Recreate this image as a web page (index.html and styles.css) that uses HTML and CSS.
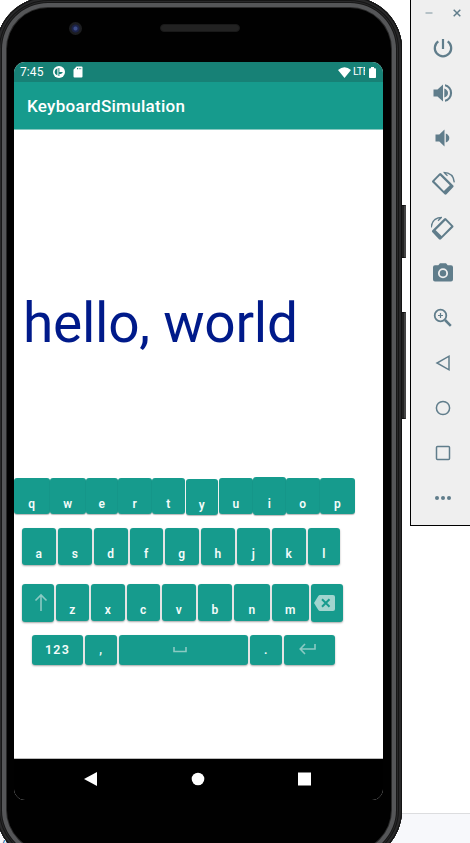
FILE: index.html
```html
<!DOCTYPE html>
<html lang="en">
<head>
<meta charset="utf-8">
<title>KeyboardSimulation</title>
<link rel="stylesheet" href="styles.css">
</head>
<body>
<div class="desktop">
  <div class="page-footer"><span class="link">/2</span></div>
  <div class="side-button power-side"></div>
  <div class="side-button volume-side"></div>

  <div class="phone">
    <div class="bezel">
      <div class="lens"></div>
      <div class="speaker"></div>
    </div>
    <div class="screen">
      <div class="status">
        <span class="time">7:45</span>
        <svg class="app-dot" width="12" height="12" viewBox="0 0 12 12"><circle cx="6" cy="6" r="6" fill="#fff"/><path d="M4.400 2.200v7.400Q1.600 8.500 1.600 6q0-2.800 2.800-3.800zM5.400 2h1v4h3.400q-.4 1.600-2 2H6.400v2h-1z" fill="#178176"/></svg>
        <svg class="sd" width="10" height="12" viewBox="0 0 10 12"><path d="M3.500.5H8.500q1 0 1 1v9q0 1-1 1h-7q-1 0-1-1V3.800z" fill="#fff"/><path d="M4 2h1v1.300H4zM5.800 2h.8v1.300h-.8zM7.400 2h.8v1.300h-.8z" fill="#178176"/></svg>
        <span class="spacer"></span>
        <svg width="13" height="11" viewBox="0 0 13 11"><path d="M6.500 11 0 3Q6.500-2.600 13 3z" fill="#fff"/></svg>
        <span class="lte">LTE</span>
        <svg class="battery" width="7" height="11" viewBox="0 0 7 11"><path d="M2 0h3v1.200h1.200q.8 0 .8.800v8.200q0 .8-.8.800H.8q-.8 0-.8-.8V2q0-.8.800-.8H2z" fill="#fff"/></svg>
      </div>
      <div class="app-bar">KeyboardSimulation</div>
      <div class="content">
        <div class="output">hello, world</div>
        <div class="keyboard">
          <div class="row row-1">
            <div class="key w36">q</div><div class="key w36">w</div><div class="key w32">e</div><div class="key w34">r</div><div class="key w33">t</div><div class="key w32 low">y</div><div class="key w34">u</div><div class="key w33 tall">i</div><div class="key w34">o</div><div class="key w35">p</div>
          </div>
          <div class="row row-2">
            <div class="key w34">a</div><div class="key w34">s</div><div class="key w34">d</div><div class="key w33">f</div><div class="key w34">g</div><div class="key w34">h</div><div class="key w33">j</div><div class="key w34">k</div><div class="key w32">l</div>
          </div>
          <div class="row row-3">
            <div class="key w32 icon"><svg class="shift" width="14" height="19" viewBox="0 0 14 19"><path d="M7 18V2M1.500 7.500 7 2l5.500 5.500"/></svg></div><div class="key w33">z</div><div class="key w34">x</div><div class="key w33">c</div><div class="key w34">v</div><div class="key w34">b</div><div class="key w36">n</div><div class="key w37">m</div><div class="key w32 icon"><svg class="erase" width="21" height="16" viewBox="0 0 21 16"><path class="solid" d="M6 0h13q2 0 2 2v12q0 2-2 2H6Q5 16 4.300 15L0 8l4.300-7Q5 0 6 0z"/><path class="cross" d="m8 4.300 7.500 7.500m0-7.500L8 11.800"/></svg></div>
          </div>
          <div class="row row-4">
            <div class="key w51 number">123</div><div class="key w32">,</div><div class="key w128 icon"><svg class="space" width="14" height="6" viewBox="0 0 14 6"><path d="M1 0v4.500h12V0"/></svg></div><div class="key w32">.</div><div class="key w51 icon"><svg class="enter" width="17" height="12" viewBox="0 0 17 12"><path d="M16 1v5H1.500M6 1 1.200 6 6 11"/></svg></div>
          </div>
        </div>
      </div>
      <div class="nav">
        <svg width="369" height="41" viewBox="0 0 369 41" fill="#fff"><path d="M70 20 83 13v14z"/><circle cx="184" cy="20" r="6.300"/><path d="M284 13.500h13v13h-13z"/></svg>
      </div>
    </div>
  </div>

  <div class="toolbar">
    <div class="window-controls">
      <svg width="45" height="10" viewBox="0 0 45 10"><path d="M4.500 5h7" stroke="#a3b3ba" stroke-width="1.500"/><path d="m32.700 1.700 6.600 6.600m0-6.600-6.600 6.600" stroke="#607d8b" stroke-width="1.500"/></svg>
    </div>
    <svg class="tool" viewBox="0 0 24 24"><path d="M12 3v10M7.300 5.400a8.200 8.200 0 1 0 9.400 0" fill="none" stroke="#607d8b" stroke-width="2.200"/></svg>
    <svg class="tool" viewBox="0 0 24 24"><path d="M2.500 8.500v7h4l5.500 5V3.500l-5.500 5zM14 3.200v2.100a7 7 0 0 1 0 13.400v2.100a9 9 0 0 0 0-17.600zM13.300 7.500v9q3.700-1.500 3.700-4.500t-3.700-4.500z"/></svg>
    <svg class="tool" viewBox="0 0 24 24"><path d="M4.500 8.500v7h3.800l5.200 5V3.500l-5.200 5zM14.800 7.500v9q3.500-1.500 3.500-4.500t-3.500-4.500z"/></svg>
    <svg class="tool" viewBox="0 0 24 24"><g id="rotate"><path fill-rule="evenodd" d="M8.300 2.500q1-.9 2 0L22.100 14.300q1 1 0 2l-6.600 7q-1 .9-2 0L1.500 11.500q-1-1 0-2zM9 4.500 3.400 10.300l9.500 9.700 5.900-5.800z"/><path d="M12.500 1.400q10 .2 10.800 10M13 1.600l3.500 3.200" fill="none" stroke="#607d8b" stroke-width="1.300"/></g></svg>
    <svg class="tool" viewBox="0 0 24 24"><use href="#rotate" transform="matrix(-1 0 0 1 23.500 0)"/></svg>
    <svg class="tool" viewBox="0 0 24 24"><path fill-rule="evenodd" d="M9 2.300h6l1.700 2H20q2 0 2 2v12.200q0 2-2 2H4q-2 0-2-2V6.300q0-2 2-2h3.300zM12 7.200a5 5 0 1 0 0 10.100 5 5 0 0 0 0-10.100"/><circle cx="12" cy="12.300" r="3.200"/></svg>
    <svg class="tool line" viewBox="0 0 24 24"><circle cx="9.500" cy="9.500" r="5.800" stroke-width="1.800"/><path d="m14 14 5.800 5.800" stroke-width="2.500"/><path d="M9.500 7v5M7 9.500h5" stroke-width="1.200"/></svg>
    <svg class="tool line" viewBox="0 0 24 24"><path d="M18 5.200v13.600L6 12z"/></svg>
    <svg class="tool line" viewBox="0 0 24 24"><circle cx="12" cy="12" r="6.600"/></svg>
    <svg class="tool line" viewBox="0 0 24 24"><rect x="5.500" y="5.500" width="13" height="13" rx="1"/></svg>
    <svg class="tool" viewBox="0 0 24 24"><circle cx="6" cy="12" r="2"/><circle cx="12" cy="12" r="2"/><circle cx="18" cy="12" r="2"/></svg>
  </div>
</div>
</body>
</html>
```
FILE: styles.css
```css
* { box-sizing: border-box; }

body {
  margin: 0;
  background: #fff;
  font-family: Roboto, "Liberation Sans", sans-serif;
}

svg { display: block; flex: none; }

.desktop {
  position: relative;
  width: 470px;
  height: 843px;
  overflow: hidden;
}

.page-footer {
  position: absolute;
  left: 0;
  right: 0;
  bottom: 0;
  height: 30px;
  border-top: 1px solid #dcdddf;
  background: #f7f8fb;
}

.link {
  display: block;
  padding-top: 23px;
  font-size: 13px;
  line-height: 16px;
  color: #0b62a8;
}

/* Handset */
.phone {
  position: absolute;
  left: -4px;
  top: -3px;
  width: 406px;
  height: 865px;
  padding: 3px 19px 0 18px;
  border-radius: 52px;
  background: #010101;
  box-shadow: inset 0 0 0 1px #141414, inset 0 0 0 3px #29292a, inset 0 0 0 4px #151515,
    inset 0 0 0 5px #29292a, inset 0 0 0 6px #171717, inset 0 0 0 10px #555658,
    inset 0 0 0 11px #292929;
}

.side-button {
  position: absolute;
  left: 400px;
  width: 6px;
  border: 1px solid #111;
  border-right: 2px solid #444;
  background: #222;
}

.power-side { top: 205px; height: 53px; }
.volume-side { top: 312px; height: 107px; }

.bezel {
  display: flex;
  align-items: center;
  height: 62px;
  padding: 0 0 6px 55px;
}

.lens {
  width: 13px;
  height: 13px;
  border-radius: 50%;
  background: radial-gradient(circle, #3c4c88 0 1.500px, #1c2349 2.500px 3.500px, #1c1d20 4.500px);
}

.speaker {
  width: 80px;
  height: 8px;
  margin-left: 78px;
  border-radius: 4px;
  background: #222;
  border: 1px solid #191919;
}

.screen {
  display: flex;
  flex-direction: column;
  width: 369px;
  height: 738px;
  border-radius: 11px;
  overflow: hidden;
  background: #fff;
}

.status {
  display: flex;
  align-items: center;
  height: 20px;
  padding: 0 7px 0 6px;
  background: #178176;
  color: #fff;
}

.time { width: 33px; font-size: 12px; letter-spacing: 0.100px; }
.sd { margin-left: 8px; }
.spacer { flex: 1; }
.lte { width: 12px; margin-left: 2px; overflow: hidden; font-size: 10.500px; line-height: 12px; letter-spacing: -0.400px; }
.battery { margin-left: 4px; }

.app-bar {
  height: 48px;
  padding-left: 13px;
  border-bottom: 1px solid #87c8c0;
  background: #169b8d;
  color: #fff;
  font-size: 17px;
  font-weight: 500;
  line-height: 49px;
  letter-spacing: 0.280px;
}

.content {
  flex: 1;
  padding-top: 160px;
  border-bottom: 1px solid #bbb;
}

.output {
  height: 66px;
  padding-left: 9px;
  color: #001a8a;
  font-size: 55px;
  line-height: 66px;
  letter-spacing: -0.250px;
  white-space: nowrap;
}

.keyboard { padding-top: 121.500px; }

.row { display: flex; gap: 2px; }
.row-1 { gap: 0; height: 50.500px; }
.row-2 { height: 56px; padding-left: 8px; }
.row-3 { height: 50.500px; padding-left: 8px; }
.row-4 { padding-left: 18px; }

.key {
  flex: none;
  height: 36.500px;
  padding-top: 18px;
  border-radius: 3px;
  background: #169b8d;
  box-shadow: 0 1px 2px rgba(0, 0, 0, 0.35);
  color: #f4fbfa;
  font-size: 12px;
  font-weight: 600;
  line-height: 16px;
  letter-spacing: 0.500px;
  text-align: center;
}

.row-1 .key { box-shadow: 0 1px 1px rgba(0, 0, 0, 0.28); }
.row-1 .low { margin: 1px 1px 0; }
.tall { height: 38.500px; margin-top: -1px; padding-top: 19px; }
.row-4 .key { height: 30.500px; padding-top: 7.500px; }
.row-4 .number { font-size: 12.500px; letter-spacing: 1.200px; }
.row-3 .icon { height: 37.500px; padding-top: 9px; }

.w32 { width: 32px; }
.w33 { width: 33px; }
.w34 { width: 34px; }
.w35 { width: 35px; }
.w36 { width: 36px; }
.w37 { width: 37px; }
.w51 { width: 51px; }
.w128 { width: 129px; }

.key svg { margin: 0 auto; fill: none; stroke: #8bcac3; stroke-width: 1.600; }
.key .shift { margin-left: 12px; }
.key .erase { margin: 2px 0 0 3px; stroke: none; }
.key .space { margin-top: 5px; margin-left: 54px; }
.key .enter { margin-left: 15px; margin-top: 1px; }
.erase .solid { fill: #a2d5cf; }
.erase .cross { stroke: #169b8d; stroke-width: 2; }

.nav { height: 41px; background: #000; }

/* Emulator controls */
.toolbar {
  position: absolute;
  left: 410px;
  top: 0;
  display: flex;
  flex-direction: column;
  align-items: center;
  gap: 21px;
  width: 60px;
  height: 526px;
  padding-left: 5px;
  border-left: 1px solid #000;
  border-bottom: 1px solid #000;
  background: #efefef;
}

.window-controls { height: 15px; padding-top: 8px; }
.tool { width: 24px; height: 24px; fill: #607d8b; }
.line { fill: none; stroke: #607d8b; stroke-width: 1.500; }
```
